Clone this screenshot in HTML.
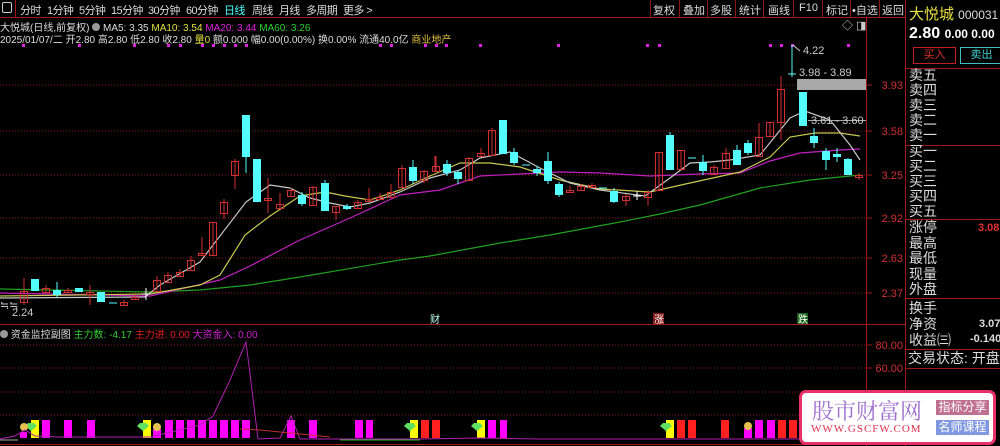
<!DOCTYPE html>
<html><head><meta charset="utf-8"><style>
*{margin:0;padding:0;box-sizing:border-box}
body{width:1000px;height:446px;background:#000;overflow:hidden;position:relative;font-family:"Liberation Sans","Noto Sans CJK SC",sans-serif;color:#ddd}
.a{position:absolute;white-space:nowrap}
.rp{font-size:14px;color:#ddd;line-height:15px}
.t{position:absolute;top:2px;font-size:11px;color:#ddd}
.tb{letter-spacing:-0.6px}
</style></head><body>
<svg class="a" style="left:0;top:0" width="1000" height="446" xmlns="http://www.w3.org/2000/svg" font-family="Liberation Sans, Noto Sans CJK SC, sans-serif">
<line x1="0" y1="17.5" x2="905" y2="17.5" stroke="#a01818"/>
<line x1="15.5" y1="0" x2="15.5" y2="17" stroke="#a01818"/>
<line x1="866.5" y1="17" x2="866.5" y2="446" stroke="#a01818"/>
<line x1="905.5" y1="0" x2="905.5" y2="446" stroke="#a01818"/>
<line x1="0" y1="324.5" x2="905" y2="324.5" stroke="#a01818"/>
<line x1="0" y1="444.5" x2="905" y2="444.5" stroke="#a01818"/>
<g stroke="#8a1a1a" stroke-dasharray="1,2">
<line x1="0" y1="85" x2="866" y2="85"/><line x1="0" y1="131" x2="866" y2="131"/><line x1="0" y1="175" x2="866" y2="175"/><line x1="0" y1="218" x2="866" y2="218"/><line x1="0" y1="258" x2="866" y2="258"/><line x1="0" y1="293" x2="866" y2="293"/>
<line x1="0" y1="345" x2="866" y2="345"/><line x1="0" y1="368" x2="866" y2="368"/><line x1="0" y1="392" x2="866" y2="392"/><line x1="0" y1="415" x2="866" y2="415"/>
</g>
<g stroke="#a01818"><line x1="866" y1="85" x2="872" y2="85"/><line x1="866" y1="131" x2="872" y2="131"/><line x1="866" y1="175" x2="872" y2="175"/><line x1="866" y1="218" x2="872" y2="218"/><line x1="866" y1="258" x2="872" y2="258"/><line x1="866" y1="293" x2="872" y2="293"/><line x1="866" y1="345" x2="872" y2="345"/><line x1="866" y1="368" x2="872" y2="368"/></g>
<g fill="#d03030" font-size="11" text-anchor="end">
<text x="903" y="89">3.93</text><text x="903" y="135">3.58</text><text x="903" y="179">3.25</text><text x="903" y="222">2.92</text><text x="903" y="262">2.63</text><text x="903" y="297">2.37</text><text x="903" y="349">80.00</text><text x="903" y="372">60.00</text>
</g>
<g fill="#e020e0"><rect x="22" y="44" width="3" height="3"/><rect x="78" y="44" width="3" height="3"/><rect x="133" y="44" width="3" height="3"/><rect x="167" y="44" width="3" height="3"/><rect x="179" y="44" width="3" height="3"/><rect x="201" y="44" width="3" height="3"/><rect x="212" y="44" width="3" height="3"/><rect x="223" y="44" width="3" height="3"/><rect x="234" y="44" width="3" height="3"/><rect x="245" y="44" width="3" height="3"/><rect x="379" y="44" width="3" height="3"/><rect x="390" y="44" width="3" height="3"/><rect x="424" y="44" width="3" height="3"/><rect x="435" y="44" width="3" height="3"/><rect x="445" y="44" width="3" height="3"/><rect x="479" y="44" width="3" height="3"/><rect x="557" y="44" width="3" height="3"/><rect x="646" y="44" width="3" height="3"/><rect x="658" y="44" width="3" height="3"/><rect x="769" y="44" width="3" height="3"/><rect x="780" y="44" width="3" height="3"/><rect x="791" y="44" width="3" height="3"/><rect x="847" y="44" width="3" height="3"/></g>
<g fill="none" stroke-width="1.2">
<polyline stroke="#20a020" points="0,289 150,292 200,290 250,285 300,277 400,260 430,256 500,243 550,235 620,222 660,214 700,205 760,188 810,180 860,175"/>
<polyline stroke="#c020c0" points="0,293 150,296 220,280 250,266 300,240 350,218 400,195 440,190 480,176 520,174 560,172 600,173 650,176 700,174 740,173 770,161 800,153 840,150 860,149"/>
<polyline stroke="#c8c850" points="0,296 150,294 200,285 220,275 245,235 270,216 300,196 325,192 345,196 370,200 400,190 430,176 460,163 490,163 520,167 560,180 600,189 650,192 690,183 740,172 770,157 790,137 815,133 840,133 860,136"/>
<polyline stroke="#c8c8c8" points="0,298 145,297 160,285 200,262 246,202 270,185 290,188 310,198 330,203 350,207 370,203 400,192 430,178 460,170 480,158 510,152 540,168 570,183 600,190 645,196 670,178 690,163 710,162 730,160 760,155 790,118 805,111 830,120 850,145 860,160"/>
</g>
<g fill="none" stroke="#d03030">
<path d="M24 278V305M46 285V293M68 288V293M90 285V305M124 300V306M135 295V299M157 276V292M168 272V283M180 269V277M191 256V271M202 237V256M213 222V256M224 199V219M235 159V189M268 178V213M280 193V209M291 188V197M313 186V206M336 206V220M358 200V209M369 188V202M380 193V200M391 184V198M402 165V188M424 170V183M435 156V171M436 156V172M469 157V181M481 148V157M492 128V156M570 186V193M581 184V191M592 183V188M626 194V206M648 190V206M659 152V191M681 150V170M714 165V175M726 148V169M759 123V157M770 122V137M781 76V140M859 173V180"/>
<rect x="20.5" y="291.5" width="7" height="11"/><rect x="42.5" y="288.5" width="7" height="4"/><rect x="64.5" y="290.5" width="7" height="2"/><rect x="86.5" y="292.5" width="7" height="2"/><rect x="120.5" y="302.5" width="7" height="3"/><rect x="131.5" y="297.5" width="7" height="2"/><rect x="153.5" y="280.5" width="7" height="11"/><rect x="164.5" y="275.5" width="7" height="7"/><rect x="176.5" y="272.5" width="7" height="4"/><rect x="187.5" y="260.5" width="7" height="10"/><rect x="198.5" y="253.5" width="7" height="2"/><rect x="209.5" y="222.5" width="7" height="33"/><rect x="220.5" y="202.5" width="7" height="11"/><rect x="231.5" y="161.5" width="7" height="14"/><rect x="264.5" y="198.5" width="7" height="2"/><rect x="276.5" y="204.5" width="7" height="4"/><rect x="287.5" y="190.5" width="7" height="6"/><rect x="309.5" y="187.5" width="7" height="18"/><rect x="332.5" y="206.5" width="7" height="6"/><rect x="354.5" y="202.5" width="7" height="6"/><rect x="365.5" y="199.5" width="7" height="2"/><rect x="376.5" y="197.5" width="7" height="2"/><rect x="387.5" y="192.5" width="7" height="5"/><rect x="398.5" y="168.5" width="7" height="19"/><rect x="420.5" y="171.5" width="7" height="9"/><rect x="432.5" y="166.5" width="7" height="5"/><rect x="465.5" y="158.5" width="7" height="22"/><rect x="477.5" y="153.5" width="7" height="3"/><rect x="488.5" y="130.5" width="7" height="25"/><rect x="566.5" y="190.5" width="7" height="2"/><rect x="577.5" y="186.5" width="7" height="4"/><rect x="588.5" y="185.5" width="7" height="2"/><rect x="622.5" y="196.5" width="7" height="4"/><rect x="644.5" y="192.5" width="7" height="5"/><rect x="655.5" y="152.5" width="7" height="38"/><rect x="677.5" y="150.5" width="7" height="19"/><rect x="710.5" y="167.5" width="7" height="7"/><rect x="722.5" y="153.5" width="7" height="15"/><rect x="755.5" y="137.5" width="7" height="19"/><rect x="766.5" y="122.5" width="7" height="14"/><rect x="777.5" y="89.5" width="7" height="33"/><rect x="855.5" y="175.5" width="7" height="2"/>
</g>
<g fill="#54ffff" stroke="#54ffff">
<path d="M57 282V297M246 115V173M257 159V202M302 192V206M325 180V211M347 204V210M413 160V184M447 160V176M458 170V184M503 120V154M514 148V165M537 166V176M548 152V184M559 182V197M614 188V203M670 132V170M703 155V175M737 145V165M748 140V155M792 45V77M803 92V126M814 128V148M826 148V170M837 148V162M848 158V175"/>
<rect x="31.5" y="279.5" width="7" height="11"/><rect x="53.5" y="290.5" width="7" height="4"/><rect x="75.5" y="288.5" width="7" height="3"/><rect x="97.5" y="292.5" width="7" height="9"/><rect x="242.5" y="115.5" width="7" height="41"/><rect x="253.5" y="159.5" width="7" height="42"/><rect x="298.5" y="195.5" width="7" height="8"/><rect x="321.5" y="183.5" width="7" height="27"/><rect x="343.5" y="206.5" width="7" height="2"/><rect x="409.5" y="167.5" width="7" height="13"/><rect x="443.5" y="164.5" width="7" height="8"/><rect x="454.5" y="172.5" width="7" height="6"/><rect x="499.5" y="120.5" width="7" height="33"/><rect x="510.5" y="152.5" width="7" height="10"/><rect x="533.5" y="169.5" width="7" height="3"/><rect x="544.5" y="161.5" width="7" height="19"/><rect x="555.5" y="184.5" width="7" height="10"/><rect x="610.5" y="191.5" width="7" height="10"/><rect x="666.5" y="135.5" width="7" height="34"/><rect x="699.5" y="162.5" width="7" height="8"/><rect x="733.5" y="150.5" width="7" height="14"/><rect x="744.5" y="143.5" width="7" height="9"/><rect x="799.5" y="92.5" width="7" height="33"/><rect x="810.5" y="136.5" width="7" height="6"/><rect x="822.5" y="151.5" width="7" height="8"/><rect x="833.5" y="154.5" width="7" height="2"/><rect x="844.5" y="159.5" width="7" height="15"/>
</g>
<g stroke="#54ffff"><path d="M109 303H117M522 165H530M599 188H607M688 158H696M788 74H796"/></g>
<g stroke="#fff"><path d="M142 294H150M146 288V300M633 196H641M637 191V200"/></g>
<rect x="797" y="79" width="69" height="11" fill="#a8a8a8"/>
<line x1="808" y1="120.5" x2="866" y2="120.5" stroke="#a8a8a8"/>
<g fill="#ccc" font-size="11"><text x="803" y="54">4.22</text><text x="799" y="76">3.98 - 3.89</text><text x="811" y="124">3.61 - 3.60</text><text x="12" y="316">2.24</text><text x="0" y="309">≒≒</text></g>
<path d="M793 45L800 51" stroke="#ccc" fill="none"/>
<text x="430" y="323" font-size="10" fill="#bfe">财</text>
<rect x="653" y="313" width="11" height="11" fill="#801818"/><text x="654" y="323" font-size="10" fill="#fff">涨</text>
<rect x="797" y="313" width="11" height="11" fill="#186018"/><text x="798" y="323" font-size="10" fill="#fff">跌</text>
<g fill="#ff00ff">
<rect x="20" y="432" width="7" height="6"/><rect x="42" y="420" width="8" height="18"/><rect x="64" y="420" width="8" height="18"/><rect x="87" y="420" width="8" height="18"/><rect x="153" y="429" width="8" height="9"/><rect x="165" y="420" width="8" height="18"/><rect x="176" y="420" width="8" height="18"/><rect x="187" y="420" width="8" height="18"/><rect x="198" y="420" width="8" height="18"/><rect x="209" y="420" width="8" height="18"/><rect x="220" y="420" width="8" height="18"/><rect x="231" y="420" width="8" height="18"/><rect x="242" y="420" width="8" height="18"/><rect x="287" y="420" width="8" height="18"/><rect x="309" y="420" width="8" height="18"/><rect x="355" y="420" width="8" height="18"/><rect x="366" y="420" width="7" height="18"/><rect x="488" y="420" width="8" height="18"/><rect x="500" y="420" width="7" height="18"/><rect x="744" y="428" width="8" height="10"/><rect x="755" y="420" width="8" height="18"/><rect x="767" y="420" width="8" height="18"/>
</g>
<g fill="#ff2020"><rect x="421" y="420" width="8" height="18"/><rect x="432" y="420" width="8" height="18"/><rect x="677" y="420" width="8" height="18"/><rect x="688" y="420" width="8" height="18"/><rect x="721" y="420" width="8" height="18"/><rect x="778" y="420" width="8" height="18"/><rect x="789" y="420" width="8" height="18"/></g>
<g fill="#ffff00"><rect x="31" y="420" width="8" height="18"/><rect x="143" y="420" width="8" height="18"/><rect x="410" y="420" width="8" height="18"/><rect x="477" y="420" width="8" height="18"/><rect x="666" y="420" width="8" height="18"/></g>
<g fill="#60e060"><path d="M28 423l6 0 3 3-6 5-6-5z"/><path d="M140 423l6 0 3 3-6 5-6-5z"/><path d="M407 423l6 0 3 3-6 5-6-5z"/><path d="M474 423l6 0 3 3-6 5-6-5z"/><path d="M663 423l6 0 3 3-6 5-6-5z"/></g>
<g fill="#e8c050"><circle cx="24" cy="427" r="4"/><circle cx="157" cy="427" r="4"/><circle cx="748" cy="426" r="4"/></g>
<polyline fill="none" stroke="#b020b0" points="0,439 15,436 25,430 35,436 60,437 150,437 200,425 213,416 230,380 246,342 258,439 280,438 291,416 300,439 420,439 480,438 540,439 866,439"/>
<polyline fill="none" stroke="#c03030" points="240,429 260,430 300,434 330,437"/>
<polyline fill="none" stroke="#30b030" points="340,440 380,440 420,440"/>
<polyline fill="none" stroke="#aaa" points="0,440 18,440"/>
</svg>

<div class="a" style="left:2px;top:2px;width:10px;height:11px;border:1px solid #ccc;border-radius:2px"></div>
<span class="t tb" style="left:20px">分时</span><span class="t tb" style="left:47px">1分钟</span><span class="t tb" style="left:79px">5分钟</span><span class="t tb" style="left:111px">15分钟</span><span class="t tb" style="left:148px">30分钟</span><span class="t tb" style="left:186px">60分钟</span><span class="t tb" style="left:224px;color:#5ff">日线</span><span class="t tb" style="left:252px">周线</span><span class="t tb" style="left:279px">月线</span><span class="t tb" style="left:306px">多周期</span><span class="t tb" style="left:343px">更多 &gt;</span>
<span class="t" style="left:653px">复权</span><span class="t" style="left:683px">叠加</span><span class="t" style="left:710px">多股</span><span class="t" style="left:739px">统计</span><span class="t" style="left:768px">画线</span><span class="t" style="left:799px">F10</span><span class="t" style="left:826px">标记</span><span class="t" style="left:852px">•自选</span><span class="t" style="left:882px">返回</span>
<svg class="a" style="left:650px;top:0" width="256" height="17"><g stroke="#8a1a1a"><line x1="0.5" y1="0" x2="0.5" y2="17"/><line x1="29.5" y1="0" x2="29.5" y2="17"/><line x1="57.5" y1="0" x2="57.5" y2="17"/><line x1="85.5" y1="0" x2="85.5" y2="17"/><line x1="113.5" y1="0" x2="113.5" y2="17"/><line x1="143.5" y1="0" x2="143.5" y2="17"/><line x1="172.5" y1="0" x2="172.5" y2="17"/><line x1="200.5" y1="0" x2="200.5" y2="17"/><line x1="229.5" y1="0" x2="229.5" y2="17"/></g></svg>
<div class="a" style="left:0;top:19px;font-size:10px;color:#ddd">大悦城(日线,前复权) <span style="display:inline-block;width:8px;height:8px;border-radius:50%;background:#999"></span> MA5: 3.35 <span style="color:#e0e040">MA10: 3.54</span> <span style="color:#e020e0">MA20: 3.44</span> <span style="color:#30d030">MA60: 3.26</span></div>
<div class="a" style="left:0;top:31px;font-size:10px;color:#ddd">2025/01/07/二 开2.80 高2.80 低2.80 收2.80 <span style="color:#e0e040">量0</span> 额0.000 幅0.00(0.00%) 换0.00% 流通40.0亿 <span style="color:#e0c040">商业地产</span></div>
<div class="a" style="left:842px;top:17px;font-size:11px;color:#ccc">◇ ◨</div>
<div class="a" style="left:0;top:326px;font-size:10px;color:#ddd"><span style="display:inline-block;width:8px;height:8px;border-radius:50%;background:#999"></span> 资金监控副图 <span style="color:#30d030">主力数: -4.17</span> <span style="color:#e02020">主力进: 0.00</span> <span style="color:#d020d0">大资金入: 0.00</span></div>

<div class="a" style="left:909px;top:3px;font-size:15px;color:#e8e040">大悦城 <span style="font-size:12px;color:#ddd">000031</span> <span style="font-size:11px;color:#f33">R</span></div>
<div class="a" style="left:909px;top:25px;font-size:16px;font-weight:bold;color:#fff">2.80 <span style="font-size:12px">0.00 0.00</span></div>
<div class="a" style="left:913px;top:47px;width:43px;height:17px;border:1px solid #c02020;color:#e03030;font-size:11px;text-align:center;line-height:15px">买入</div>
<div class="a" style="left:960px;top:47px;width:43px;height:17px;border:1px solid #40c0c0;color:#40d0d0;font-size:11px;text-align:center;line-height:15px">卖出</div>
<svg class="a" style="left:905px;top:0" width="95" height="446"><g stroke="#a01818"><line x1="0" y1="68.5" x2="95" y2="68.5"/><line x1="0" y1="145.5" x2="95" y2="145.5"/><line x1="0" y1="219.5" x2="95" y2="219.5"/><line x1="0" y1="298.5" x2="95" y2="298.5"/><line x1="0" y1="349.5" x2="95" y2="349.5"/><line x1="0" y1="368.5" x2="95" y2="368.5"/></g></svg>
<div class="a rp" style="left:909px;top:68px">卖五<br>卖四<br>卖三<br>卖二<br>卖一</div>
<div class="a rp" style="left:909px;top:144px">买一<br>买二<br>买三<br>买四<br>买五</div>
<div class="a rp" style="left:909px;top:220px;line-height:15.5px">涨停<br>最高<br>最低<br>现量<br>外盘</div>
<div class="a" style="left:978px;top:222px;font-size:11px;font-weight:bold;color:#e03030">3.08</div>
<div class="a rp" style="left:909px;top:300px;line-height:16px">换手<br>净资<br>收益㈢</div>
<div class="a" style="left:979px;top:318px;font-size:11px;font-weight:bold;color:#ddd">3.07</div>
<div class="a" style="left:970px;top:333px;font-size:11px;font-weight:bold;color:#ddd">-0.140</div>
<div class="a rp" style="left:908px;top:351px">交易状态: 开盘前</div>

<div class="a" style="left:799px;top:390px;width:197px;height:55px;background:#fff;border:3px solid #e8306a;border-radius:7px"></div>
<div class="a" style="left:812px;top:395px;font-size:22px;color:#a070d0;font-family:'Noto Serif CJK SC',serif">股市财富网</div>
<div class="a" style="left:811px;top:423px;font-size:11px;color:#e03050;font-family:'Liberation Serif',serif;letter-spacing:1px">WWW.GSCFW.COM</div>
<div class="a" style="left:936px;top:400px;width:53px;height:15px;background:#c07090;color:#fff;font-size:12px;text-align:center;line-height:15px">指标分享</div>
<div class="a" style="left:936px;top:420px;width:53px;height:15px;background:#8098e0;color:#fff;font-size:12px;text-align:center;line-height:15px">名师课程</div>
</body></html>
